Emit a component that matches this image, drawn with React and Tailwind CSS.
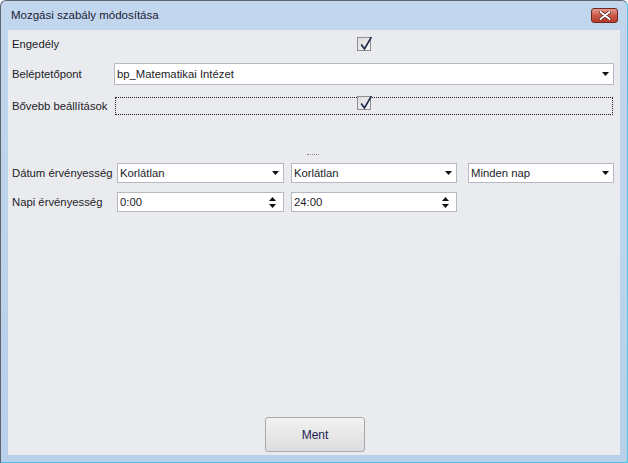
import { useState } from "react";

const Check = () => (
  <div className="w-[14px] h-[14px] border border-[#8e8f8f] bg-gradient-to-br from-[#dcdcdc] to-[#f6f6f6] relative">
    <svg viewBox="0 0 14 14" className="absolute -top-[3px] left-0 w-[15px] h-[16px]">
      <path d="M3 8.5 L6 12.5 L12.5 1.5" fill="none" stroke="#1e2a4a" strokeWidth="1.6" />
    </svg>
  </div>
);

const Arrow = () => (
  <svg viewBox="0 0 7 4" className="w-[7px] h-[4px]">
    <path d="M0 0 H7 L3.5 4 Z" fill="#111" />
  </svg>
);

const Spin = () => (
  <div className="flex flex-col gap-[3px] items-center">
    <svg viewBox="0 0 7 4" className="w-[7px] h-[4px]">
      <path d="M0 4 H7 L3.5 0 Z" fill="#111" />
    </svg>
    <svg viewBox="0 0 7 4" className="w-[7px] h-[4px]">
      <path d="M0 0 H7 L3.5 4 Z" fill="#111" />
    </svg>
  </div>
);

const Combo = ({ text, w, h = "h-[20px]" }) => (
  <div className={`${w} ${h} bg-white border border-[#b5b8c0] flex items-center justify-between pl-[2px] pr-[4px]`}>
    <span className="whitespace-nowrap">{text}</span>
    <Arrow />
  </div>
);

const SpinBox = ({ text, w }) => (
  <div className={`${w} h-[20px] bg-white border border-[#b5b8c0] flex items-center justify-between pl-[2px] pr-[7px]`}>
    <span>{text}</span>
    <Spin />
  </div>
);

const App = () => {
  const [saved, setSaved] = useState(false);

  return (
    <div className="w-[628px] h-[463px] bg-white overflow-hidden" style={{ fontFamily: '"Liberation Sans", Arial, sans-serif' }}>
      <div className="w-full h-full flex flex-col rounded-t-[6px] border border-[#5e6470] border-b-[#4fc3e3] border-r-[#4fc3e3] bg-gradient-to-b from-[#c2d6ed] to-[#b8d0ea]">
        <div className="h-[29px] flex items-center justify-between pl-[10px] pr-[9px] shrink-0">
          <span className="text-[11.5px] text-[#1b1b38] mt-[1px]">Mozgási szabály módosítása</span>
          <div className="w-[27px] h-[15px] rounded-[3px] border border-[#6e2a22] bg-gradient-to-b from-[#e49a8c] via-[#c9594a] to-[#b7392a] flex items-center justify-center">
            <svg viewBox="0 0 12 9" className="w-[12px] h-[9px]">
              <path d="M1.5 1 L10.5 8 M10.5 1 L1.5 8" stroke="#4a1a14" strokeWidth="3.4" strokeLinecap="round" />
              <path d="M1.5 1 L10.5 8 M10.5 1 L1.5 8" stroke="#ffffff" strokeWidth="2" strokeLinecap="round" />
            </svg>
          </div>
        </div>
        <div className="flex-1 flex px-[7px] pb-[7px]">
          <div className="flex-1 bg-[#e9ebef] flex flex-col text-[11.3px] text-[#1c1c28] pl-[4px] pr-[6px] whitespace-nowrap">
            <div className="flex items-center mt-[7px] h-[14px]">
              <span className="w-[102px] shrink-0">Engedély</span>
              <div className="flex-1 flex justify-center">
                <Check />
              </div>
            </div>
            <div className="flex items-center mt-[12px] h-[22px]">
              <span className="w-[102px] shrink-0">Beléptetőpont</span>
              <Combo text="bp_Matematikai Intézet" w="flex-1" h="h-[22px]" />
            </div>
            <div className="flex items-center mt-[12px] h-[18px]">
              <span className="w-[103px] shrink-0">Bővebb beállítások</span>
              <div className="flex-1 h-[18px] border border-dotted border-[#222] mr-[1px] flex justify-center">
                <div className="-mt-[2px]">
                  <Check />
                </div>
              </div>
            </div>
            <div className="flex justify-center mt-[39px] h-[4px]">
              <div className="w-[12px] border-t border-dotted border-[#8a8a8a]" />
            </div>
            <div className="flex items-center mt-[5px] h-[20px]">
              <span className="w-[105px] shrink-0">Dátum érvényesség</span>
              <div className="flex gap-[7px]">
                <Combo text="Korlátlan" w="w-[167px]" />
                <Combo text="Korlátlan" w="w-[166px]" />
              </div>
              <div className="ml-[11px] flex-1">
                <Combo text="Minden nap" w="w-full" />
              </div>
            </div>
            <div className="flex items-center mt-[9px] h-[20px]">
              <span className="w-[105px] shrink-0">Napi érvényesség</span>
              <div className="flex gap-[7px]">
                <SpinBox text="0:00" w="w-[167px]" />
                <SpinBox text="24:00" w="w-[166px]" />
              </div>
            </div>
            <div className="flex-1" />
            <div className="flex justify-center mb-[3px] pl-[4px]">
              <button
                onClick={() => setSaved(!saved)}
                className="w-[100px] h-[35px] rounded-[3px] border border-[#a9a9a9] bg-gradient-to-b from-[#f2f2f2] to-[#dddddf] text-[#1d1d55] text-[12px]"
              >
                Ment
              </button>
            </div>
          </div>
        </div>
      </div>
    </div>
  );
};

export default App;
